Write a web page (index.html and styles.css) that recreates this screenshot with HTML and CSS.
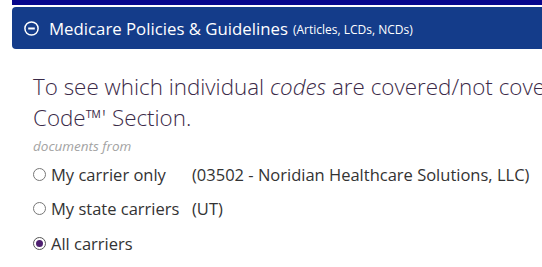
FILE: index.html
```html
<!DOCTYPE html>
<html lang="en">
<head>
    <meta charset="UTF-8">
    <meta name="viewport" content="width=device-width, initial-scale=1.0">
    <title>Medicare Policies &amp; Guidelines</title>
    <link rel="stylesheet" href="styles.css">
</head>
<body>
    <div class="topbar"></div>
    <div class="panel-head">
        <svg class="toggle" width="15" height="15" viewBox="0 0 15 15">
            <circle cx="7.5" cy="7.5" r="6.6" fill="none" stroke="#fff" stroke-width="1.5"/>
            <line x1="4.2" y1="7.5" x2="10.8" y2="7.5" stroke="#fff" stroke-width="2"/>
        </svg>
        <span class="title">Medicare Policies &amp; Guidelines</span>
        <span class="sub">(Articles, LCDs, NCDs)</span>
    </div>
    <div class="panel-body">
        <p class="intro">To see which individual <em>codes</em> are covered/not covered, go to the 'By<br>Code™' Section.</p>
        <p class="from">documents from</p>
        <div class="choices">
            <label class="opt"><span class="radio"></span>My carrier only</label>
            <span class="note">(03502 - Noridian Healthcare Solutions, LLC)</span>
            <label class="opt"><span class="radio"></span>My state carriers</label>
            <span class="note">(UT)</span>
            <label class="opt"><span class="radio checked"></span>All carriers</label>
            <span class="note"></span>
        </div>
    </div>
</body>
</html>
```

FILE: styles.css
```css
* {
    padding: 0;
    margin: 0;
    box-sizing: border-box;
}
body {
    width: 542px;
    overflow: hidden;
    font-family: "Open Sans", "Noto Sans", sans-serif;
    background: #fff;
}
.topbar {
    margin-left: 12px;
    height: 5px;
    background: #06068c;
}
.panel-head {
    margin: 2px 0 0 12px;
    height: 42px;
    background: #143c8a;
    border-radius: 4px 0 0 4px;
    color: #fff;
    display: flex;
    align-items: center;
    padding-left: 12px;
    white-space: nowrap;
}
.toggle {
    flex: none;
    margin-right: 10px;
}
.title {
    font-size: 16.8px;
}
.sub {
    font-size: 12px;
    margin-left: 5px;
    padding-top: 2px;
}
.panel-body {
    padding: 22px 0 0 33px;
}
.intro {
    white-space: nowrap;
    font-size: 22.4px;
    font-weight: 300;
    line-height: 31px;
    color: #3b2a48;
}
.intro em {
    font-style: italic;
}
.from {
    margin-top: 5px;
    font-size: 13.5px;
    font-style: italic;
    color: #a3a3a3;
    line-height: 17px;
}
.choices {
    display: grid;
    grid-template-columns: 159px auto;
    grid-auto-rows: 34.5px;
    align-items: center;
    margin-top: 2px;
    font-size: 16.5px;
    color: #333;
    white-space: nowrap;
}
.opt {
    display: flex;
    align-items: center;
}
.radio {
    width: 13px;
    height: 13px;
    border: 1px solid #777;
    border-radius: 50%;
    margin-right: 5px;
    display: flex;
    align-items: center;
    justify-content: center;
}
.radio.checked {
    border-color: #555;
}
.radio.checked::after {
    content: "";
    width: 7px;
    height: 7px;
    border-radius: 50%;
    background: #4e1f70;
}
```
